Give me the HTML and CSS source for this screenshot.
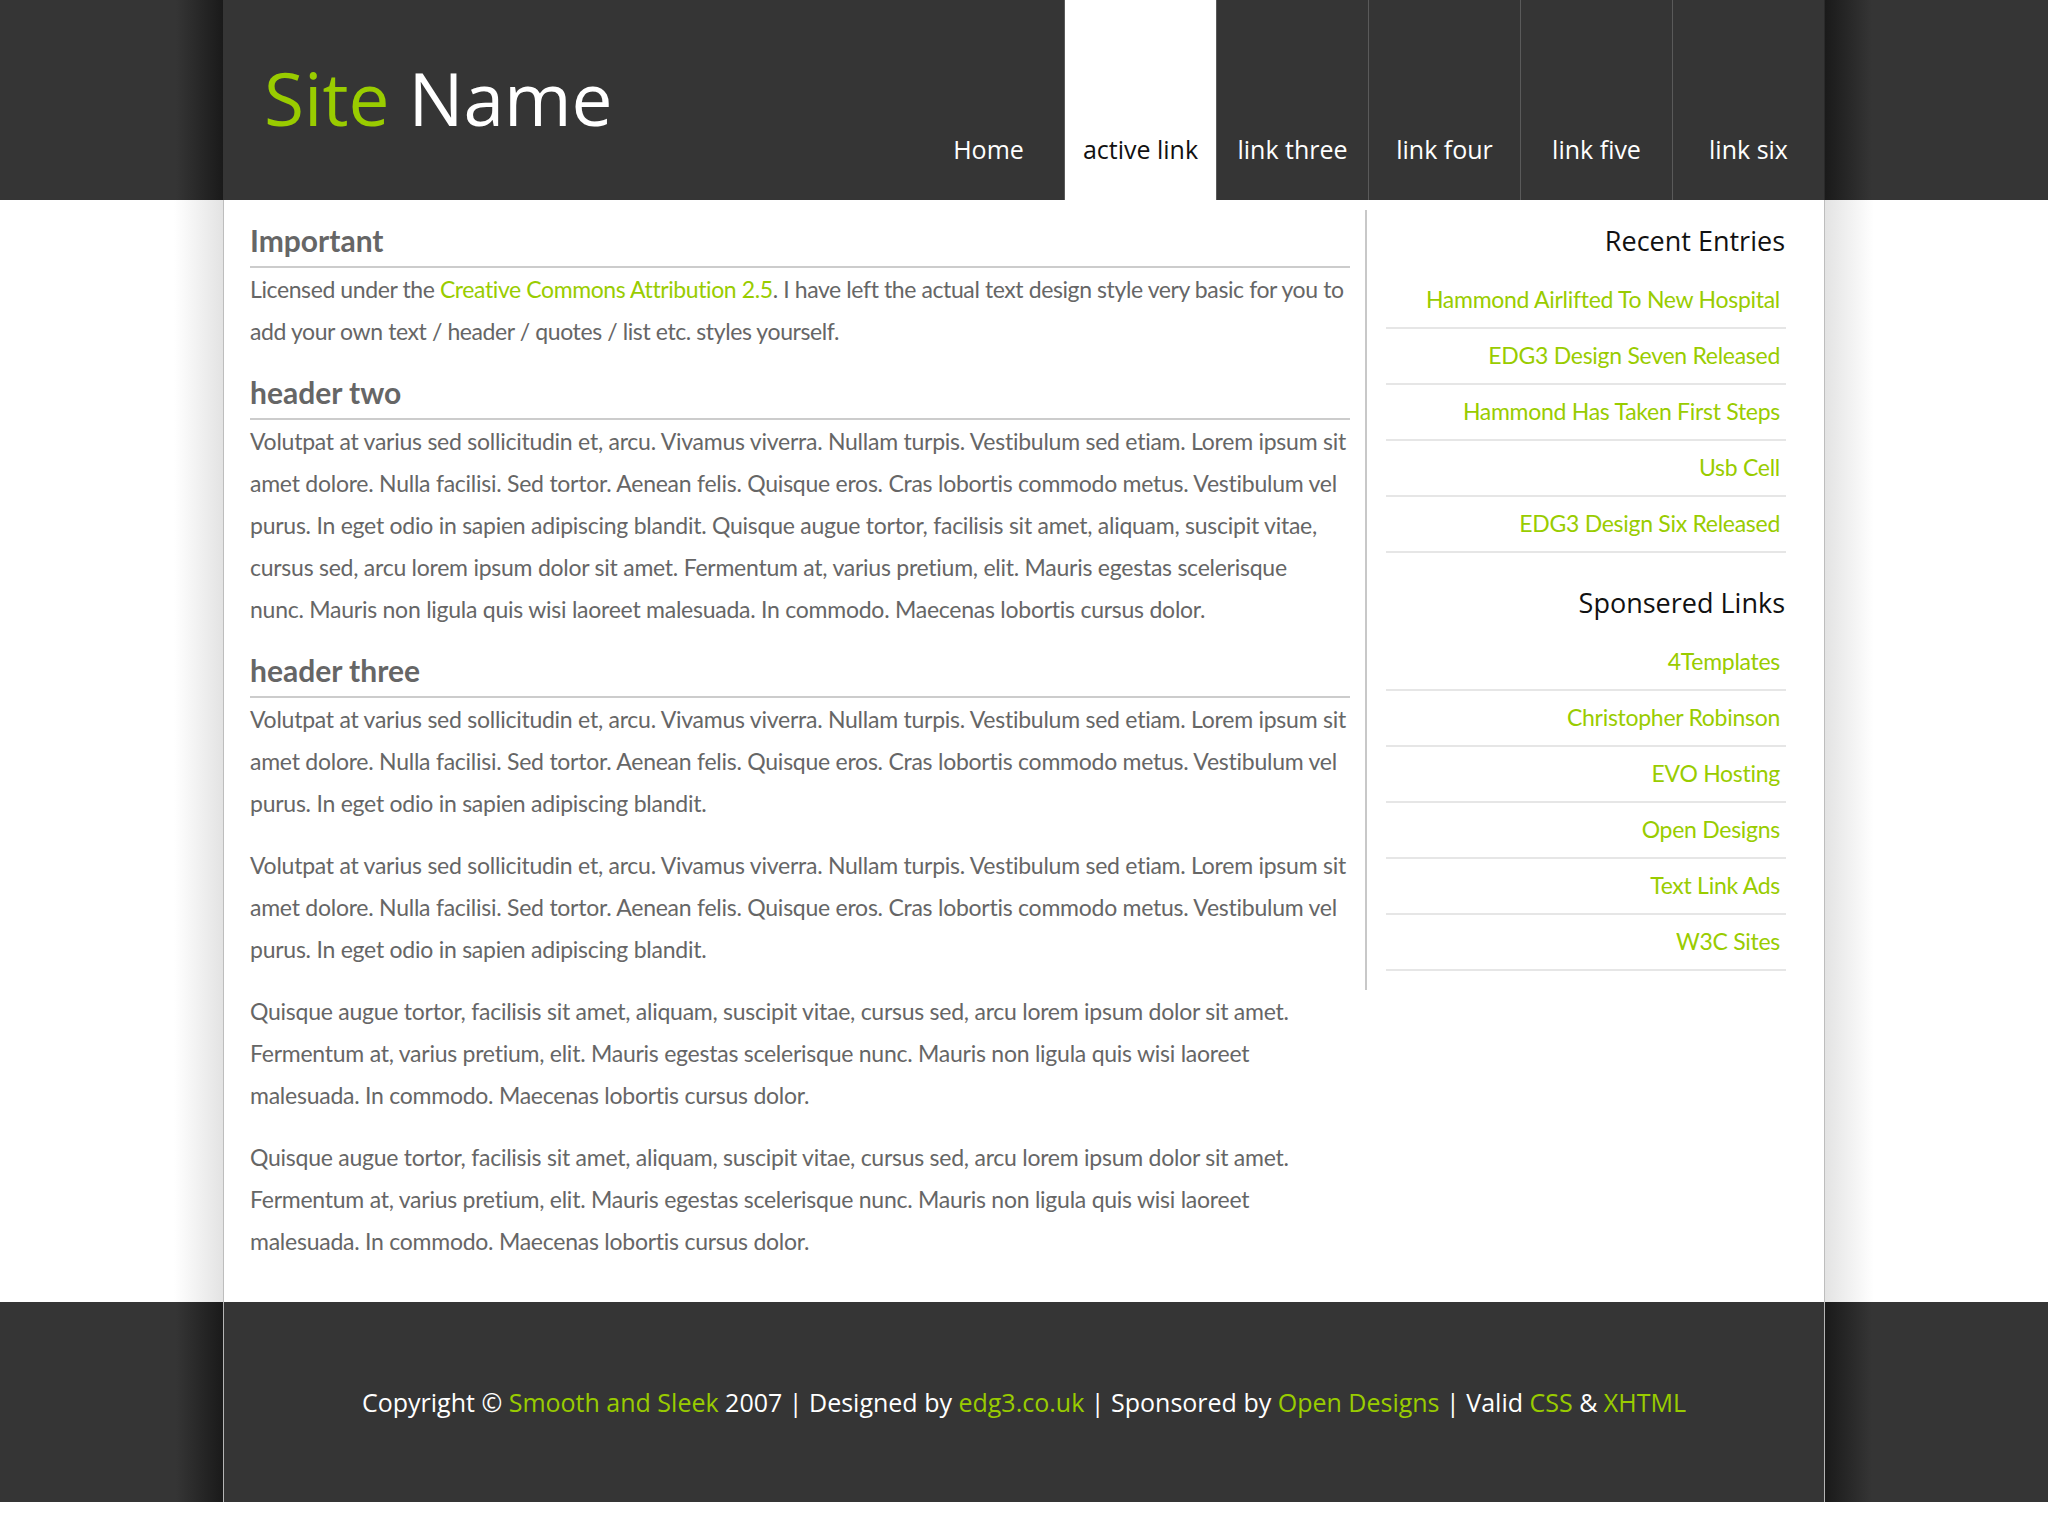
FILE: index.html
```html
<!DOCTYPE html>
<html lang="en">
<head>
<meta charset="utf-8">
<title>Site Name</title>
<link rel="stylesheet" href="styles.css">
</head>
<body>
<div class="band band-header">
  <header class="wrap header">
    <h1 class="logo"><span class="logo-green">Site</span> Name</h1>
    <nav class="nav">
      <a class="tab" href="#">Home</a>
      <a class="tab tab-active" href="#">active link</a>
      <a class="tab" href="#">link three</a>
      <a class="tab" href="#">link four</a>
      <a class="tab" href="#">link five</a>
      <a class="tab" href="#">link six</a>
    </nav>
  </header>
</div>
<div class="band band-main">
  <main class="wrap main">
    <section class="content">
      <h2 class="heading">Important</h2>
      <p class="text text-intro">Licensed under the <a class="link" href="#">Creative Commons Attribution 2.5</a>. I have left the actual text design style very basic for you to<br>
      add your own text / header / quotes / list etc. styles yourself.</p>
      <h2 class="heading">header two</h2>
      <p class="text">Volutpat at varius sed sollicitudin et, arcu. Vivamus viverra. Nullam turpis. Vestibulum sed etiam. Lorem ipsum sit<br>
      amet dolore. Nulla facilisi. Sed tortor. Aenean felis. Quisque eros. Cras lobortis commodo metus. Vestibulum vel<br>
      purus. In eget odio in sapien adipiscing blandit. Quisque augue tortor, facilisis sit amet, aliquam, suscipit vitae,<br>
      cursus sed, arcu lorem ipsum dolor sit amet. Fermentum at, varius pretium, elit. Mauris egestas scelerisque<br>
      nunc. Mauris non ligula quis wisi laoreet malesuada. In commodo. Maecenas lobortis cursus dolor.</p>
      <h2 class="heading">header three</h2>
      <p class="text">Volutpat at varius sed sollicitudin et, arcu. Vivamus viverra. Nullam turpis. Vestibulum sed etiam. Lorem ipsum sit<br>
      amet dolore. Nulla facilisi. Sed tortor. Aenean felis. Quisque eros. Cras lobortis commodo metus. Vestibulum vel<br>
      purus. In eget odio in sapien adipiscing blandit.</p>
      <p class="text">Volutpat at varius sed sollicitudin et, arcu. Vivamus viverra. Nullam turpis. Vestibulum sed etiam. Lorem ipsum sit<br>
      amet dolore. Nulla facilisi. Sed tortor. Aenean felis. Quisque eros. Cras lobortis commodo metus. Vestibulum vel<br>
      purus. In eget odio in sapien adipiscing blandit.</p>
      <p class="text">Quisque augue tortor, facilisis sit amet, aliquam, suscipit vitae, cursus sed, arcu lorem ipsum dolor sit amet.<br>
      Fermentum at, varius pretium, elit. Mauris egestas scelerisque nunc. Mauris non ligula quis wisi laoreet<br>
      malesuada. In commodo. Maecenas lobortis cursus dolor.</p>
      <p class="text">Quisque augue tortor, facilisis sit amet, aliquam, suscipit vitae, cursus sed, arcu lorem ipsum dolor sit amet.<br>
      Fermentum at, varius pretium, elit. Mauris egestas scelerisque nunc. Mauris non ligula quis wisi laoreet<br>
      malesuada. In commodo. Maecenas lobortis cursus dolor.</p>
    </section>
    <aside class="sidebar">
      <h3 class="side-title">Recent Entries</h3>
      <ul class="side-list">
        <li class="side-item"><a class="link" href="#">Hammond Airlifted To New Hospital</a></li>
        <li class="side-item"><a class="link" href="#">EDG3 Design Seven Released</a></li>
        <li class="side-item"><a class="link" href="#">Hammond Has Taken First Steps</a></li>
        <li class="side-item"><a class="link" href="#">Usb Cell</a></li>
        <li class="side-item"><a class="link" href="#">EDG3 Design Six Released</a></li>
      </ul>
      <h3 class="side-title side-title-next">Sponsered Links</h3>
      <ul class="side-list">
        <li class="side-item"><a class="link" href="#">4Templates</a></li>
        <li class="side-item"><a class="link" href="#">Christopher Robinson</a></li>
        <li class="side-item"><a class="link" href="#">EVO Hosting</a></li>
        <li class="side-item"><a class="link" href="#">Open Designs</a></li>
        <li class="side-item"><a class="link" href="#">Text Link Ads</a></li>
        <li class="side-item"><a class="link" href="#">W3C Sites</a></li>
      </ul>
    </aside>
  </main>
</div>
<div class="band band-footer">
  <footer class="wrap footer">
    <p class="footer-text">Copyright © <a class="link" href="#">Smooth and Sleek</a> 2007 | Designed by <a class="link" href="#">edg3.co.uk</a> | Sponsored by <a class="link" href="#">Open Designs</a> | Valid <a class="link" href="#">CSS</a> &amp; <a class="link" href="#">XHTML</a></p>
  </footer>
</div>
</body>
</html>
```
FILE: styles.css
```css
html, body {
  margin: 0;
  padding: 0;
  background: #ffffff;
}

body {
  font-family: "Lato", "Liberation Sans", sans-serif;
}

a {
  text-decoration: none;
}

.link {
  color: #99cc00;
}

.band-header,
.band-footer {
  background: linear-gradient(to right,
    #353535 calc(50% - 848px),
    #1a1a1a calc(50% - 801px),
    #353535 calc(50% - 801px),
    #353535 calc(50% + 801px),
    #1a1a1a calc(50% + 801px),
    #353535 calc(50% + 848px));
}

.band-main {
  background: linear-gradient(to right,
    #ffffff calc(50% - 850px),
    #e3e3e3 calc(50% - 801px),
    #ffffff calc(50% - 801px),
    #ffffff calc(50% + 801px),
    #e3e3e3 calc(50% + 801px),
    #ffffff calc(50% + 850px));
}

.wrap {
  width: 1602px;
  margin: 0 auto;
  box-sizing: border-box;
}

/* Header */
.header {
  height: 200px;
  display: flex;
  justify-content: space-between;
  align-items: flex-start;
  background: #353535;
}

.logo {
  margin: 0;
  padding: 61px 0 0 41px;
  font-family: "Open Sans", "DejaVu Sans", sans-serif;
  font-weight: 400;
  font-size: 73px;
  line-height: 1;
  color: #ffffff;
}

.logo-green {
  color: #99cc00;
}

.nav {
  display: flex;
  height: 200px;
}

.tab {
  width: 152px;
  height: 200px;
  box-sizing: border-box;
  border-right: 1px solid #5a5a5a;
  padding-top: 137px;
  text-align: center;
  font-family: "Open Sans", "DejaVu Sans", sans-serif;
  font-size: 25px;
  line-height: 25px;
  color: #ffffff;
}

.tab:last-child {
  border-right-color: #2a2a2a;
}

.tab-active {
  background: #ffffff;
  color: #111111;
}

/* Main */
.main {
  background: #ffffff;
  border-left: 1px solid #bdbdbd;
  border-right: 1px solid #bdbdbd;
  display: grid;
  grid-template-columns: 1100px 421px;
  column-gap: 15px;
  padding: 10px 38px 20px 26px;
  align-items: start;
}

.heading {
  margin: 23px 0 0;
  padding-bottom: 9px;
  border-bottom: 2px solid #cccccc;
  font-family: "Lato", "Liberation Sans", sans-serif;
  font-weight: 700;
  font-size: 30px;
  line-height: 34px;
  color: #666666;
}

.heading:first-child {
  margin-top: 13px;
}

.text {
  margin: 0 0 20px;
  font-size: 23px;
  line-height: 42px;
  color: #666666;
  letter-spacing: -0.25px;
  white-space: nowrap;
}

.text-intro {
  letter-spacing: -0.4px;
}

.sidebar {
  border-left: 2px solid #c8c8c8;
  padding: 0 0 19px 19px;
}

.side-title {
  margin: 16px 0 17px;
  padding-right: 1px;
  text-align: right;
  font-family: "Open Sans", "DejaVu Sans", sans-serif;
  font-weight: 400;
  font-size: 27px;
  line-height: 30px;
  color: #111111;
}

.side-title-next {
  margin-top: 35px;
}

.side-list {
  list-style: none;
  margin: 0;
  padding: 0;
}

.side-item {
  padding: 5px 6px 7px 0;
  border-bottom: 2px solid #e6e6e6;
  text-align: right;
  font-size: 23px;
  line-height: 42px;
  letter-spacing: -0.28px;
}

/* Footer */
.footer {
  height: 200px;
  background: #353535;
  border-left: 1px solid #b5b5b5;
  border-right: 1px solid #b5b5b5;
}

.footer-text {
  margin: 0;
  text-align: center;
  font-family: "Open Sans", "DejaVu Sans", sans-serif;
  font-size: 25px;
  line-height: 200px;
  color: #ffffff;
}
```
